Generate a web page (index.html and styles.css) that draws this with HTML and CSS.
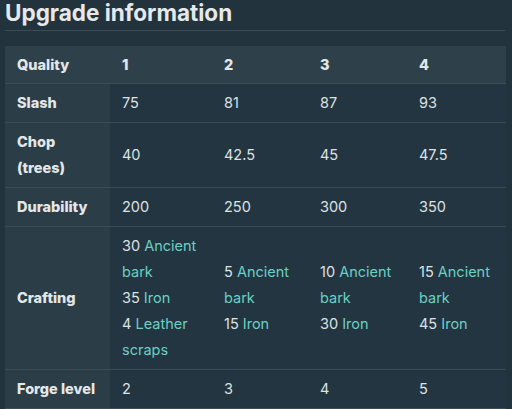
FILE: index.html
```html
<!DOCTYPE html>
<html>
<head>
<meta charset="utf-8">
<link rel="stylesheet" href="styles.css">
</head>
<body>
<div class="page">
  <h2 class="title">Upgrade information</h2>
  <table class="upgrade">
    <tr class="head">
      <th>Quality</th><th>1</th><th>2</th><th>3</th><th>4</th>
    </tr>
    <tr>
      <th>Slash</th><td>75</td><td>81</td><td>87</td><td>93</td>
    </tr>
    <tr>
      <th>Chop<br>(trees)</th><td>40</td><td>42.5</td><td>45</td><td>47.5</td>
    </tr>
    <tr>
      <th>Durability</th><td>200</td><td>250</td><td>300</td><td>350</td>
    </tr>
    <tr>
      <th>Crafting</th>
      <td>30 <a>Ancient</a><br><a>bark</a><br>35 <a>Iron</a><br>4 <a>Leather</a><br><a>scraps</a></td>
      <td>5 <a>Ancient</a><br><a>bark</a><br>15 <a>Iron</a></td>
      <td>10 <a>Ancient</a><br><a>bark</a><br>30 <a>Iron</a></td>
      <td>15 <a>Ancient</a><br><a>bark</a><br>45 <a>Iron</a></td>
    </tr>
    <tr>
      <th>Forge level</th><td>2</td><td>3</td><td>4</td><td>5</td>
    </tr>
  </table>
</div>
</body>
</html>
```

FILE: styles.css
```css
html, body {
  margin: 0;
  padding: 0;
  background: #22333e;
}
.page {
  padding: 0 5px;
  font-family: Inter, "Noto Sans", sans-serif;
  color: #dde2e4;
}
.title {
  margin: 0;
  font-size: 22.5px;
  line-height: 26px;
  font-weight: 700;
  color: #e6e8e9;
  padding-bottom: 4px;
  border-bottom: 1px solid #3a4c56;
  width: 500px;
}
.upgrade {
  margin-top: 15px;
  border-collapse: collapse;
  width: 501px;
  table-layout: fixed;
  font-size: 14.5px;
  line-height: 26px;
}
.upgrade th, .upgrade td {
  padding: 6px 12px;
  text-align: left;
  vertical-align: middle;
  border-bottom: 1px solid #3a4c56;
}
.upgrade th {
  font-weight: 800;
  color: #e4e7e8;
  background: #2b3d47;
}
.upgrade td {
  font-weight: 400;
  background: #233540;
}
.upgrade th:nth-child(1) { width: 81px; }
.upgrade tr > :nth-child(2) { width: 78px; }
.upgrade tr > :nth-child(3) { width: 72px; }
.upgrade tr > :nth-child(4) { width: 75px; }
.upgrade tr > :nth-child(5) { width: 75px; }
.upgrade tr.head th {
  background: #2e414a;
  padding-top: 6px;
  padding-bottom: 5px;
}
.upgrade a {
  color: #6ccfc4;
}
```
